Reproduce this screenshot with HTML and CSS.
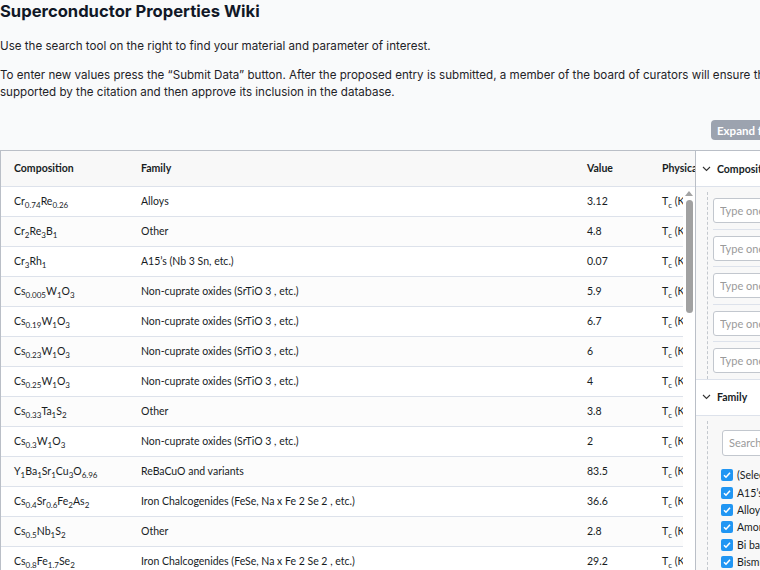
FILE: index.html
```html
<!DOCTYPE html>
<html lang="en">
<head>
    <meta charset="UTF-8">
    <meta name="viewport" content="width=device-width, initial-scale=1.0">
    <title>Superconductor Properties Wiki</title>
    <link rel="stylesheet" href="styles.css">
</head>
<body>
    <main class="page">
        <h1 class="title">Superconductor Properties Wiki</h1>
        <p class="intro">Use the search tool on the right to find your material and parameter of interest.</p>
        <p class="intro">To enter new values press the “Submit Data” button. After the proposed entry is submitted, a member of the board of curators will ensure that the data is supported by the citation and then approve its inclusion in the database.</p>

        <div class="toolbar">
            <div></div>
            <div class="toolbar-side">
                <button class="expand-btn">Expand filter panel</button>
            </div>
        </div>

        <div class="workspace">
            <div class="grid">
                <div class="grid-header">
                    <div class="cell col-comp">Composition</div>
                    <div class="cell col-family">Family</div>
                    <div class="cell col-value">Value</div>
                    <div class="cell col-prop">Physical Property</div>
                </div>
                <div class="grid-body">
                    <div class="grid-rows" id="grid-rows">
                        <!-- Will be populated by JavaScript -->
                    </div>
                    <div class="scrollbar">
                        <span class="scroll-arrow"></span>
                        <span class="scroll-thumb"></span>
                    </div>
                </div>
            </div>

            <aside class="filters">
                <section class="filter-section">
                    <div class="filter-head">
                        <svg class="chevron" width="9" height="6" viewBox="0 0 9 6"><path d="M1 1l3.5 3.5L8 1" fill="none" stroke="#333" stroke-width="1.1"/></svg>
                        <span>Composition</span>
                    </div>
                    <div class="filter-body">
                        <div class="filter-list">
                            <div class="filter-item"><input type="text" placeholder="Type one element"></div>
                            <div class="filter-item"><input type="text" placeholder="Type one element"></div>
                            <div class="filter-item"><input type="text" placeholder="Type one element"></div>
                            <div class="filter-item"><input type="text" placeholder="Type one element"></div>
                            <div class="filter-item"><input type="text" placeholder="Type one element"></div>
                        </div>
                    </div>
                </section>
                <section class="filter-section">
                    <div class="filter-head">
                        <svg class="chevron" width="9" height="6" viewBox="0 0 9 6"><path d="M1 1l3.5 3.5L8 1" fill="none" stroke="#333" stroke-width="1.1"/></svg>
                        <span>Family</span>
                    </div>
                    <div class="filter-body">
                        <div class="filter-list family-list">
                            <input class="family-search" type="text" placeholder="Search...">
                            <div class="check-list" id="family-checks"></div>
                        </div>
                    </div>
                </section>
            </aside>
        </div>
    </main>

    <script>
        const NON_CUPRATE = 'Non-cuprate oxides (SrTiO 3 , etc.)';
        const IRON = 'Iron Chalcogenides (FeSe, Na x Fe 2 Se 2 , etc.)';

        const records = [
            ['Cr0.74Re0.26', 'Alloys', '3.12'],
            ['Cr2Re3B1', 'Other', '4.8'],
            ['Cr3Rh1', 'A15\u2019s (Nb 3 Sn, etc.)', '0.07'],
            ['Cs0.005W1O3', NON_CUPRATE, '5.9'],
            ['Cs0.19W1O3', NON_CUPRATE, '6.7'],
            ['Cs0.23W1O3', NON_CUPRATE, '6'],
            ['Cs0.25W1O3', NON_CUPRATE, '4'],
            ['Cs0.33Ta1S2', 'Other', '3.8'],
            ['Cs0.3W1O3', NON_CUPRATE, '2'],
            ['Y1Ba1Sr1Cu3O6.96', 'ReBaCuO and variants', '83.5'],
            ['Cs0.4Sr0.6Fe2As2', IRON, '36.6'],
            ['Cs0.5Nb1S2', 'Other', '2.8'],
            ['Cs0.8Fe1.7Se2', IRON, '29.2']
        ];

        const families = ['(Select All)', 'A15\u2019s (Nb 3 Sn, etc.)', 'Alloys', 'Amorphous', 'Bi based', 'Bismuthates'];

        // Wrap the stoichiometric numbers in <sub>
        function formatFormula(formula) {
            return formula.replace(/(\d+(?:\.\d+)?)/g, '<sub>$1</sub>');
        }

        function renderRows() {
            const container = document.getElementById('grid-rows');
            let html = '';
            records.forEach(([comp, family, value]) => {
                html += `
                    <div class="grid-row">
                        <div class="cell col-comp">${formatFormula(comp)}</div>
                        <div class="cell col-family">${family}</div>
                        <div class="cell col-value">${value}</div>
                        <div class="cell col-prop">T<sub>c</sub> (K)</div>
                    </div>
                `;
            });
            container.innerHTML = html;
        }

        function renderFamilies() {
            const container = document.getElementById('family-checks');
            let html = '';
            families.forEach(name => {
                html += `
                    <label class="check-row">
                        <span class="check-box"><svg width="10" height="10" viewBox="0 0 10 10"><path d="M2 5.2l2 2 4-4.4" fill="none" stroke="#fff" stroke-width="1.6"/></svg></span>
                        <span>${name}</span>
                    </label>
                `;
            });
            container.innerHTML = html;
        }

        renderRows();
        renderFamilies();
    </script>
</body>
</html>
```

FILE: styles.css
```css
html, body {
    margin: 0;
    padding: 0;
    overflow: hidden;
    background-color: #f9fafb;
}
.page {
    width: 870px;
    font-family: Inter, 'Noto Sans', sans-serif;
    color: #1f2328;
}
.title {
    font-size: 16.6px;
    line-height: 22px;
    font-weight: 700;
    color: #111827;
    margin: 0 0 16px;
}
.intro {
    font-size: 11.6px;
    line-height: 17px;
    margin: 0 0 12px;
}
.toolbar {
    display: grid;
    grid-template-columns: 695px 1fr;
    margin-top: 19px;
    margin-bottom: 10px;
}
.toolbar-side {
    padding-left: 16px;
}
.expand-btn {
    display: block;
    font-family: Lato, 'Open Sans', sans-serif;
    font-size: 11.5px;
    font-weight: 700;
    color: white;
    background-color: #9ca3af;
    border: none;
    border-radius: 4px;
    height: 20px;
    padding: 0 6px;
}
.workspace {
    display: grid;
    grid-template-columns: 695px 1fr;
    font-family: Lato, 'Open Sans', sans-serif;
    font-size: 10.5px;
    color: #181d1f;
}
.grid {
    border-top: 1px solid #babfc7;
    border-left: 1px solid #babfc7;
    overflow: hidden;
    background: white;
}
.grid-header {
    display: flex;
    height: 35px;
    background-color: #f8f8f8;
    border-bottom: 1px solid #dde2eb;
    font-weight: 700;
}
.grid-header .cell {
    line-height: 35px;
}
.cell {
    padding-left: 13px;
    box-sizing: border-box;
    flex-shrink: 0;
    white-space: nowrap;
    overflow: hidden;
}
.col-comp { width: 127px; }
.col-family { width: 446px; }
.col-value { width: 75px; }
.col-prop { width: 150px; }
.grid-body {
    display: flex;
}
.grid-rows {
    width: 682px;
    overflow: hidden;
}
.grid-row {
    display: flex;
    height: 30px;
    box-sizing: border-box;
    border-bottom: 1px solid #dde2eb;
    line-height: 29px;
}
.grid-row:nth-child(even) {
    background-color: #fcfcfc;
}
sub {
    font-size: 8px;
    line-height: 0;
    vertical-align: -3px;
}
.scrollbar {
    width: 12px;
    display: flex;
    flex-direction: column;
    align-items: center;
    background: white;
}
.scroll-arrow {
    margin-top: 4px;
    width: 0;
    height: 0;
    border-left: 4px solid transparent;
    border-right: 4px solid transparent;
    border-bottom: 5px solid #a3a3a3;
}
.scroll-thumb {
    margin-top: 4px;
    width: 7px;
    height: 113px;
    border-radius: 4px;
    background-color: #a1a1a1;
}
.filters {
    border-top: 1px solid #babfc7;
    border-left: 1px solid #babfc7;
    background: white;
}
.filter-head {
    display: flex;
    align-items: center;
    gap: 6px;
    height: 35px;
    padding-left: 6px;
    border-bottom: 1px solid #dde2eb;
    background: white;
    font-weight: 700;
}
.filter-section + .filter-section {
    border-top: 1px solid #dde2eb;
}
.filter-body {
    background-color: #f8f8f8;
    padding: 5px 0 0 11px;
}
.filter-list {
    border-left: 1px dashed #c4c8ce;
    padding-left: 5px;
}
.filter-item {
    padding: 6px 0 5.5px;
    border-bottom: 1px solid #dde2eb;
}
.filter-item:last-child {
    border-bottom: none;
}
input {
    display: block;
    width: 150px;
    height: 25px;
    box-sizing: border-box;
    padding: 0 6px;
    border: 1px solid #c2c7ce;
    border-radius: 3px;
    background: white;
    font-family: Lato, 'Open Sans', sans-serif;
    font-size: 11px;
}
input::placeholder {
    color: #9a9a9a;
}
.family-list {
    padding: 9px 0 4px 13px;
}
.family-search {
    height: 26px;
    margin-left: 1px;
}
.check-list {
    margin-top: 11px;
}
.check-row {
    display: flex;
    align-items: center;
    gap: 4px;
    height: 17.4px;
    white-space: nowrap;
}
.check-box {
    width: 12px;
    height: 12px;
    border-radius: 2px;
    background-color: #2196f3;
    display: flex;
    align-items: center;
    justify-content: center;
}
```
